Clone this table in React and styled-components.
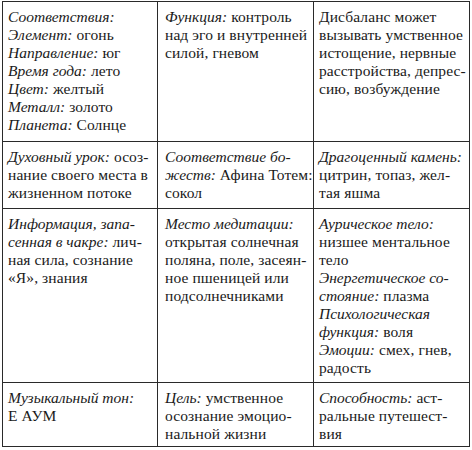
import React from 'react';
import styled, { createGlobalStyle } from 'styled-components';

const GlobalStyle = createGlobalStyle`
  html, body {
    margin: 0;
    padding: 0;
    background: #ffffff;
  }
`;

// Page wrapper with the small offset of the scanned table
const Page = styled.div`
  padding: 1px 2px 0 2px;
  width: 472px;
  box-sizing: border-box;
`;

const Table = styled.div`
  display: grid;
  grid-template-columns: 155px 156px 156px;
  grid-template-rows: 140px 67px 174px 64px;
  border-top: 1px solid #2a2a2a;
  border-left: 1px solid #2a2a2a;
  width: 468px;
  box-sizing: border-box;
  font-family: "Liberation Serif", serif;
  font-size: 15.5px;
  line-height: 18px;
  color: #1a1a1a;
`;

const Cell = styled.div`
  border-right: 1px solid #2a2a2a;
  border-bottom: 1px solid #2a2a2a;
  padding: 6px 3px 0 ${(p) => p.$pad}px;
  box-sizing: border-box;
`;

const Line = styled.div`
  white-space: nowrap;
`;

const Plain = styled.span`
  letter-spacing: 0.1px;
`;

const Label = styled.em`
  font-style: italic;
`;

const rows = [
  [
    [
      [['i', 'Соответствия:']],
      [['i', 'Элемент:'], ' огонь'],
      [['i', 'Направление:'], ' юг'],
      [['i', 'Время года:'], ' лето'],
      [['i', 'Цвет:'], ' желтый'],
      [['i', 'Металл:'], ' золото'],
      [['i', 'Планета:'], ' Солнце'],
    ],
    [
      [['i', 'Функция:'], ' контроль'],
      ['над эго и внутренней'],
      ['силой, гневом'],
    ],
    [
      ['Дисбаланс может'],
      ['вызывать умственное'],
      ['истощение, нервные'],
      ['расстройства, депрес-'],
      ['сию, возбуждение'],
    ],
  ],
  [
    [
      [['i', 'Духовный урок:'], ' осоз-'],
      ['нание своего места в'],
      ['жизненном потоке'],
    ],
    [
      [['i', 'Соответствие бо-']],
      [['i', 'жеств:'], ' Афина Тотем:'],
      ['сокол'],
    ],
    [
      [['i', 'Драгоценный камень:']],
      ['цитрин, топаз, жел-'],
      ['тая яшма'],
    ],
  ],
  [
    [
      [['i', 'Информация, запа-']],
      [['i', 'сенная в чакре:'], ' лич-'],
      ['ная сила, сознание'],
      ['«Я», знания'],
    ],
    [
      [['i', 'Место медитации:']],
      ['открытая солнечная'],
      ['поляна, поле, засеян-'],
      ['ное пшеницей или'],
      ['подсолнечниками'],
    ],
    [
      [['i', 'Аурическое тело:']],
      ['низшее ментальное'],
      ['тело'],
      [['i', 'Энергетическое со-']],
      [['i', 'стояние:'], ' плазма'],
      [['i', 'Психологическая']],
      [['i', 'функция:'], ' воля'],
      [['i', 'Эмоции:'], ' смех, гнев,'],
      ['радость'],
    ],
  ],
  [
    [
      [['i', 'Музыкальный тон:']],
      ['Е АУМ'],
    ],
    [
      [['i', 'Цель:'], ' умственное'],
      ['осознание эмоцио-'],
      ['нальной жизни'],
    ],
    [
      [['i', 'Способность:'], ' аст-'],
      ['ральные путешест-'],
      ['вия'],
    ],
  ],
];

const pads = [5, 7, 5];

const App = () => {
  return (
    <Page>
      <GlobalStyle />
      <Table>
        {rows.map((row, r) =>
          row.map((cell, c) => (
            <Cell key={`${r}-${c}`} $pad={pads[c]}>
              {cell.map((line, l) => (
                <Line key={l}>
                  {line.map((part, p) =>
                    Array.isArray(part) ? <Label key={p}>{part[1]}</Label> : <Plain key={p}>{part}</Plain>
                  )}
                </Line>
              ))}
            </Cell>
          ))
        )}
      </Table>
    </Page>
  );
};

export default App;
